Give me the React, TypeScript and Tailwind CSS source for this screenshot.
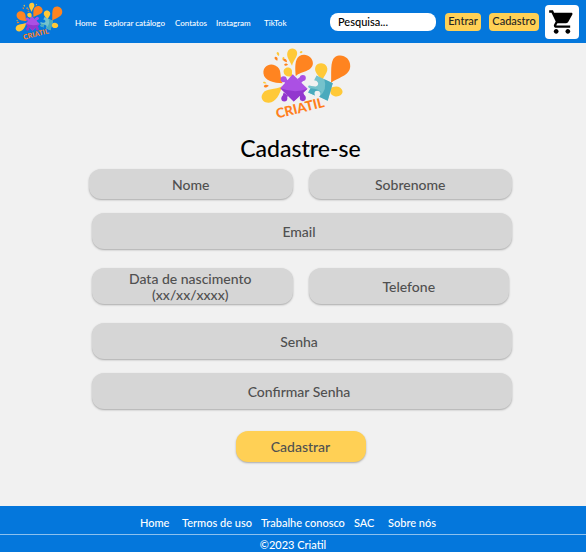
import React from "react";

function Logo({ className }: { className: string }) {
  return (
    <svg viewBox="34 20 267 226" className={className} role="img" aria-label="Criatil">
      <g fill="#ffc938">
        <path d="M126 76C119 60 109 50 112 37C115 23 134 20 140 33C146 46 130 59 126 76Z" />
        <path d="M96 137C90 160 79 184 57 186C39 187 30 170 39 158C50 142 76 148 96 137Z" />
        <path d="M126 106C114 111 102 105 101 94C100 82 115 77 123 85C128 90 125 98 126 106Z" />
        <path d="M217 119C202 104 190 92 196 78C202 65 222 65 229 78C237 94 219 106 217 119Z" />
        <path d="M238 145C254 132 273 138 276 151C278 165 257 173 244 162C238 157 241 151 238 145Z" />
        <path d="M87 47C80 43 78 37 83 35C88 35 89 42 87 47ZM99 60C95 55 98 49 102 50C105 53 102 57 99 60ZM50 128C45 130 39 128 40 124C44 122 48 124 50 128ZM149 38C149 33 154 30 157 34C157 38 153 39 149 38Z" />
      </g>
      <g fill="#ff8420">
        <path d="M98 128C73 128 43 120 41 99C39 78 58 67 76 75C99 85 87 108 98 128Z" />
        <path d="M137 106C135 84 133 57 148 47C166 36 188 50 188 68C187 93 154 91 137 106Z" />
        <path d="M242 127C244 101 238 61 254 50C272 38 300 51 299 77C298 107 260 110 242 127Z" />
        <path d="M82 61C75 58 71 51 77 49C84 50 84 56 82 61ZM111 65C104 64 98 61 100 56C106 53 111 58 111 65ZM114 73C108 77 102 76 103 71C107 67 112 69 114 73ZM57 135C50 142 43 142 42 136C45 131 52 131 57 135Z" />
      </g>
      <g fill="#ab50e4">
        <path d="M128 101L172 144L131 182L91 143Z" />
        <circle cx="101" cy="116" r="9" />
        <circle cx="158" cy="112" r="9" />
        <path d="M101 122L107 112L118 124L110 132ZM142 115L152 108L162 118L152 128Z" />
      </g>
      <g fill="#9237ce">
        <path d="M91 143Q137 159 172 144L131 182Z" />
        <circle cx="158" cy="172" r="9" />
        <circle cx="103" cy="173" r="9" />
        <path d="M148 160L158 153L165 168L152 174ZM101 155L114 164L108 178L97 168Z" />
      </g>
      <path
        fill="#75c2cc"
        d="M199 105L247 128L232 180L207 168C214 158 208 148 199 150C192 151 191 158 194 164L174 155L181 143C169 140 174 130 184 136L190 137C203 139 207 129 201 123C196 118 191 122 193 116Z"
      />
      <path fill="#4aaabd" d="M222 116L247 128L232 180L207 168Q232 148 222 116Z" />
      <path fill="#4aaabd" d="M174 155L181 143Q204 144 214 156Q212 148 199 150C192 151 191 158 194 164Z" />
      <text
        x="82"
        y="233"
        transform="rotate(-14 82 233)"
        fill="#ff7f1c"
        fontSize="40"
        fontWeight="900"
        fontFamily="Lato, sans-serif"
      >
        CRIATIL
      </text>
    </svg>
  );
}

const field =
  "block w-full rounded-xl bg-[#d6d6d6] text-center text-sm font-medium text-[#505050] shadow-[0_1px_2px_#a9a9a9] outline-none placeholder:text-[#505050] placeholder:opacity-100";

export default function App() {
  return (
    <div className="flex min-h-screen flex-col bg-[#f1f1f1] font-[Lato,'Open_Sans',sans-serif]">
      <header className="flex h-[43px] items-center bg-[#0477dc] pr-[7px] pl-[15px]">
        <a href="#home" className="mr-3 shrink-0">
          <Logo className="h-10 w-12" />
        </a>
        <nav className="grid shrink-0 grid-cols-[29px_71px_41px_48px_28px] pt-[2px] text-[8px] font-medium whitespace-nowrap text-white">
          <a href="#home">Home</a>
          <a href="#catalogo">Explorar catálogo</a>
          <a href="#contatos">Contatos</a>
          <a href="#instagram">Instagram</a>
          <a href="#tiktok">TikTok</a>
        </nav>
        <div className="ml-auto flex items-center">
          <input
            type="search"
            aria-label="Pesquisa"
            placeholder="Pesquisa..."
            className="h-[18px] w-[106px] rounded-lg bg-white px-2 text-[11px] font-medium text-black outline-none placeholder:text-black"
          />
          <button className="ml-[9px] h-[18px] w-9 rounded bg-[#ffd055] text-[11px] font-medium text-[#242424]">Entrar</button>
          <button className="ml-2 h-[18px] w-[50px] rounded bg-[#ffd055] text-[11px] font-medium text-[#242424]">Cadastro</button>
          <button aria-label="Carrinho" className="ml-[6px] flex size-[34px] items-center justify-center rounded bg-white">
            <svg viewBox="0 0 24 24" className="size-7" fill="black">
              <path d="M7 18c-1.1 0-1.99.9-1.99 2S5.9 22 7 22s2-.9 2-2-.9-2-2-2z" />
              <path d="M17 18c-1.1 0-1.99.9-1.99 2s.89 2 1.99 2 2-.9 2-2-.9-2-2-2z" />
              <path d="M1 2v2h2l3.6 7.59-1.35 2.45c-.16.28-.25.61-.25.96 0 1.1.9 2 2 2h12v-2H7.42c-.14 0-.25-.11-.25-.25l.03-.12.9-1.63h7.45c.75 0 1.41-.41 1.75-1.03l3.58-6.49c.08-.14.12-.31.12-.48 0-.55-.45-1-1-1H5.21l-.94-2H1z" />
            </svg>
          </button>
        </div>
      </header>

      <main className="mx-auto flex w-full max-w-[438px] flex-1 flex-col pb-[43px] pl-[15px]">
        <Logo className="mt-1 mr-[-10px] h-[76px] w-[90px] self-center" />
        <h1 className="mt-[9px] mb-[5px] text-center text-[23px] leading-8 font-medium text-black">Cadastre-se</h1>
        <form>
          <div className="grid grid-cols-2 gap-4">
            <input aria-label="Nome" placeholder="Nome" className={`${field} h-[30px]`} />
            <input aria-label="Sobrenome" placeholder="Sobrenome" className={`${field} h-[30px]`} />
          </div>
          <div className="mt-[14px] pl-[3px]">
            <input type="email" aria-label="Email" placeholder="Email" className={`${field} h-9 pr-[6px]`} />
          </div>
          <div className="mt-[19px] grid grid-cols-2 gap-4 pr-[3px] pl-[3px]">
            <textarea
              rows={2}
              aria-label="Data de nascimento"
              placeholder={"Data de nascimento\n(xx/xx/xxxx)"}
              className={`${field} h-9 resize-none overflow-hidden pt-[3px] pr-1 leading-4`}
            />
            <input type="tel" aria-label="Telefone" placeholder="Telefone" className={`${field} h-9`} />
          </div>
          <div className="mt-[19px] flex flex-col gap-[14px] pl-[3px]">
            <input type="password" aria-label="Senha" placeholder="Senha" className={`${field} h-9 pr-[6px]`} />
            <input type="password" aria-label="Confirmar Senha" placeholder="Confirmar Senha" className={`${field} h-9 pr-[6px]`} />
          </div>
          <button type="submit" className="mx-auto mt-[22px] block h-[31px] w-[130px] rounded-xl bg-[#ffd055] text-sm font-medium text-[#505050] shadow-[0_1px_2px_#a9a9a9]">
            Cadastrar
          </button>
        </form>
      </main>

      <footer className="bg-[#0477dc] text-[11px] leading-4 font-medium text-white">
        <nav className="grid grid-cols-[42px_79px_93px_34px_46px] justify-center border-b border-[#8cc0ee] pt-[9px] pr-3 pb-[3px] whitespace-nowrap">
          <a href="#home">Home</a>
          <a href="#termos">Termos de uso</a>
          <a href="#trabalhe">Trabalhe conosco</a>
          <a href="#sac">SAC</a>
          <a href="#sobre">Sobre nós</a>
        </nav>
        <p className="h-[17px] pt-[2px] text-center">©2023 Criatil</p>
      </footer>
    </div>
  );
}
